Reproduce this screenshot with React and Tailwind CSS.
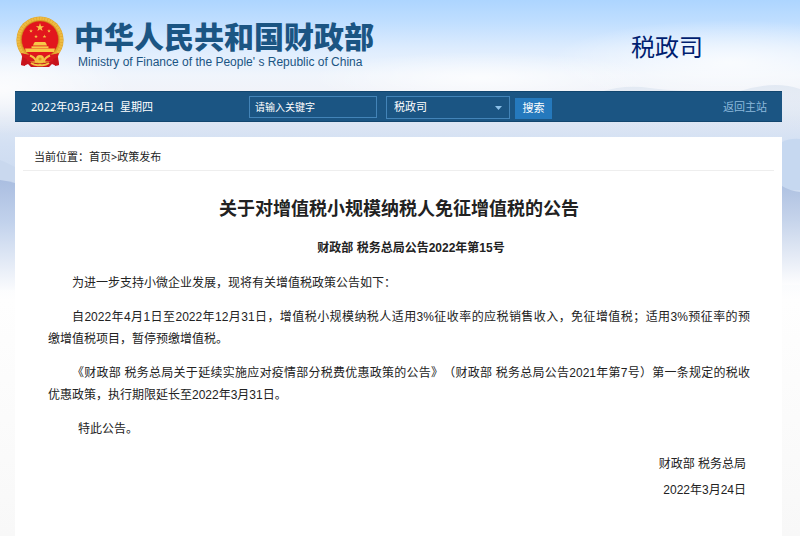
import React from "react";

const STAR =
  "M0 -1 L0.23 -0.31 L0.95 -0.31 L0.37 0.12 L0.59 0.81 L0 0.38 L-0.59 0.81 L-0.37 0.12 L-0.95 -0.31 L-0.23 -0.31 Z";

function Sky() {
  return (
    <svg
      className="absolute inset-0 -z-10 h-full w-full"
      viewBox="0 0 800 536"
      preserveAspectRatio="none"
      aria-hidden="true"
    >
      <defs>
        <linearGradient id="sky" x1="0" y1="0" x2="0" y2="536" gradientUnits="userSpaceOnUse">
          <stop offset="0" stopColor="#add5ff" />
          <stop offset="0.04" stopColor="#bfdeff" />
          <stop offset="0.09" stopColor="#ddecfe" />
          <stop offset="0.14" stopColor="#f0f5fc" />
          <stop offset="0.17" stopColor="#f1f3f9" />
          <stop offset="0.22" stopColor="#dfe7f4" />
          <stop offset="0.27" stopColor="#d3e0f3" />
          <stop offset="0.34" stopColor="#cbdaf0" />
          <stop offset="0.48" stopColor="#f4f7fc" />
          <stop offset="0.56" stopColor="#fefefe" />
          <stop offset="1" stopColor="#f8f8f8" />
        </linearGradient>
        <linearGradient id="ridgeLeft" x1="0" y1="178" x2="0" y2="290" gradientUnits="userSpaceOnUse">
          <stop offset="0" stopColor="#a9bde0" />
          <stop offset="0.4" stopColor="#c2d2ec" />
          <stop offset="1" stopColor="#fafbfd" />
        </linearGradient>
        <linearGradient id="ridgeRight" x1="0" y1="186" x2="0" y2="285" gradientUnits="userSpaceOnUse">
          <stop offset="0" stopColor="#afc2e2" />
          <stop offset="0.35" stopColor="#c6d4eb" />
          <stop offset="1" stopColor="#fdfdfe" />
        </linearGradient>
        <linearGradient id="far" x1="0" y1="84" x2="0" y2="130" gradientUnits="userSpaceOnUse">
          <stop offset="0" stopColor="#e2e9f3" />
          <stop offset="1" stopColor="#dfe7f2" stopOpacity="0" />
        </linearGradient>
        <radialGradient id="glow">
          <stop offset="0" stopColor="#ffffff" stopOpacity="0.75" />
          <stop offset="1" stopColor="#ffffff" stopOpacity="0" />
        </radialGradient>
      </defs>
      <rect width="800" height="536" fill="url(#sky)" />
      <ellipse cx="0" cy="88" rx="130" ry="46" fill="url(#glow)" />
      <ellipse cx="480" cy="78" rx="170" ry="26" fill="url(#glow)" />
      <ellipse cx="730" cy="62" rx="180" ry="42" fill="url(#glow)" />
      <path d="M600 92 Q625 84 650 88 Q680 92 740 91 Q775 80 800 89 V130 H600 Z" fill="url(#far)" />
      <path d="M782 142 Q790 138 800 139 V190 H782 Z" fill="#c6d8f0" />
      <path d="M0 160 Q8 163 15 167 V190 H0 Z" fill="#c9d8ee" />
      <path d="M0 180 Q8 181 15 183 V290 H0 Z" fill="url(#ridgeLeft)" />
      <path d="M782 186 Q790 191 800 192 V285 H782 Z" fill="url(#ridgeRight)" />
    </svg>
  );
}

function Emblem() {
  return (
    <svg className="h-[52px] w-[48px] shrink-0" viewBox="0 0 48 52" role="img" aria-label="国徽">
      <path d="M7 38 L5 49 Q9 50 12 48 L15 51 H33 L36 48 Q39 50 43 49 L41 38 Z" fill="#c9151e" />
      <circle cx="24" cy="24" r="23.6" fill="#e0a52c" />
      <circle cx="24" cy="24" r="21.6" fill="none" stroke="#eebb42" strokeWidth="3" strokeDasharray="2.2 0.6" />
      <circle cx="24" cy="23.5" r="18.6" fill="#e2161d" stroke="#c98a1c" strokeWidth="0.6" />
      <g fill="#f7c948">
        <path d={STAR} transform="translate(24 11.5) scale(4.4)" />
        <path d={STAR} transform="translate(15 15) scale(2)" />
        <path d={STAR} transform="translate(33 15) scale(2)" />
        <path d={STAR} transform="translate(20 20.5) scale(2)" />
        <path d={STAR} transform="translate(28.5 20.5) scale(2)" />
        <path d="M18 27 L19 26 H29 L30 27 L31 29.5 H17 Z" />
        <path d="M15.5 30.3 H32.5 V32.3 H15.5 Z" />
        <path d="M9 32.5 H39 L38 36 H10 Z" />
      </g>
      <path d="M5 37 Q15 40 24 38.5 Q33 40 43 37 L41 44 Q32 47 24 44 Q16 47 7 44 Z" fill="#d8181f" />
      <path
        d="M14 39.5 Q20 42 20 46 M34 39.5 Q28 42 28 46 M15 47 Q19 50 24 49 Q29 50 33 47"
        fill="none"
        stroke="#f3c244"
        strokeWidth="2"
      />
      <circle cx="24" cy="43" r="4" fill="#f3c244" />
      <circle cx="24" cy="43" r="1.6" fill="#d9961f" />
      <path d="M6 41 L11 43 L9 50 L5 49 Z M42 41 L37 43 L39 50 L43 49 Z" fill="#c8131b" />
    </svg>
  );
}

function FullLine({ children }) {
  return <span className="block [text-align-last:justify]">{children}</span>;
}

export default function App() {
  return (
    <div className="relative isolate flex min-h-screen flex-col pl-[15px] pr-[18px] font-['Noto_Sans','Noto_Sans_CJK_SC',sans-serif] text-[11px]">
      <Sky />
      <header className="flex h-[91px] items-start justify-between pr-[79px] pl-px">
        <div className="flex gap-[10px] pt-4">
          <Emblem />
          <div className="text-[#1b5583]">
            <h1 className="font-['Noto_Sans_CJK_SC',sans-serif] text-[30px] leading-[38px] font-black">
              中华人民共和国财政部
            </h1>
            <p className="pl-1 font-['Liberation_Sans',sans-serif] text-[12px] leading-4">
              Ministry of Finance of the People&#39; s Republic of China
            </p>
          </div>
        </div>
        <h2 className="pt-7 font-['Noto_Sans_CJK_SC',sans-serif] text-[24px] leading-9 text-[#001e70]">
          税政司
        </h2>
      </header>

      <div className="flex h-[31px] items-center border-y border-[#12466f] bg-[#1b5583] pt-px pr-[15px] pl-4 text-white">
        <p className="w-[218px] whitespace-pre">2022年03月24日  星期四</p>
        <form className="flex items-start" onSubmit={(e) => e.preventDefault()}>
          <input
            aria-label="关键字"
            defaultValue="请输入关键字"
            className="h-[22px] w-[128px] border border-[#4384b8] bg-transparent px-[5px] text-[10px] outline-none"
          />
          <div className="relative ml-[9px]">
            <select
              aria-label="站点"
              className="block h-[23px] w-[124px] appearance-none border border-[#4384b8] bg-[#1b5583] px-[7px] outline-none"
            >
              <option>税政司</option>
            </select>
            <svg className="pointer-events-none absolute top-[10px] right-2 h-1 w-[7px]" viewBox="0 0 7 4">
              <path d="M0 0 H7 L3.5 4 Z" fill="#8cc0e8" />
            </svg>
          </div>
          <button type="submit" className="mt-[2px] ml-[5px] h-[21px] w-[37px] bg-[#2579bd]">
            搜索
          </button>
        </form>
        <a href="#" className="ml-auto text-[#8cb9dc]">
          返回主站
        </a>
      </div>

      <main className="mt-[15px] flex-1 bg-white px-2 font-['Liberation_Sans','Noto_Sans_CJK_SC',sans-serif] text-[#222222]">
        <nav className="h-[34px] border-b border-[#eeeeee] pt-[10px] pl-[11px] font-['Noto_Sans','Noto_Sans_CJK_SC',sans-serif] leading-5">
          当前位置：<a href="#">首页</a>&gt;<a href="#">政策发布</a>
        </nav>
        <article className="pr-6 pb-8 pl-[25px] text-[12px] leading-[22px] [text-spacing-trim:space-all]">
          <h1 className="mt-6 text-center text-[18px] leading-7 font-bold">
            关于对增值税小规模纳税人免征增值税的公告
          </h1>
          <h2 className="mt-[14px] text-center indent-6 font-bold">财政部 税务总局公告2022年第15号</h2>
          <div className="mt-[13px] space-y-3">
            <p className="indent-6">为进一步支持小微企业发展，现将有关增值税政策公告如下：</p>
            <p className="indent-6">
              <FullLine>
                自2022年4月1日至2022年12月31日，增值税小规模纳税人适用3%征收率的应税销售收入，免征增值税；适用3%预征率的预
              </FullLine>
              <span className="block indent-0">缴增值税项目，暂停预缴增值税。</span>
            </p>
            <p className="indent-6">
              <FullLine>
                《财政部 税务总局关于延续实施应对疫情部分税费优惠政策的公告》（财政部 税务总局公告2021年第7号）第一条规定的税收
              </FullLine>
              <span className="block indent-0">优惠政策，执行期限延长至2022年3月31日。</span>
            </p>
            <p className="indent-[30px]">特此公告。</p>
          </div>
          <div className="mt-[11px] pr-1 text-right leading-[26px]">
            <p>财政部 税务总局</p>
            <p>2022年3月24日</p>
          </div>
        </article>
      </main>
    </div>
  );
}
